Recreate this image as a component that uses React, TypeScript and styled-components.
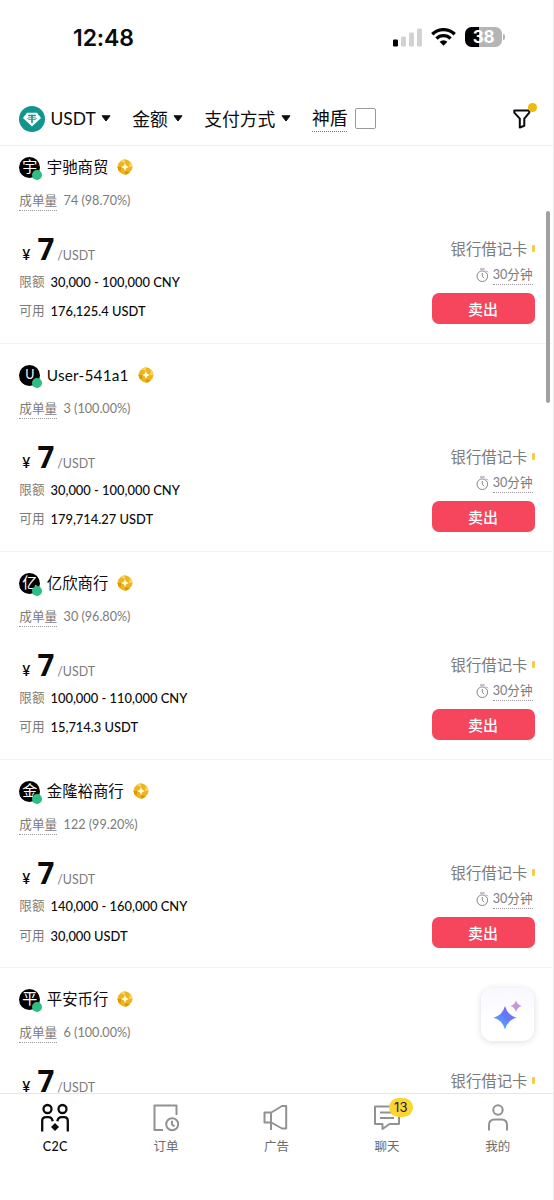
import React from "react";
import styled, { createGlobalStyle } from "styled-components";

const Global = createGlobalStyle`
  * { box-sizing: border-box; }
  body {
    margin: 0;
    background: #fff;
    color: #0b0b0b;
    font-family: Lato, "Noto Sans CJK SC", sans-serif;
  }
`;

const Screen = styled.div`
  position: relative;
  width: 554px;
  height: 1200px;
  display: flex;
  flex-direction: column;
  overflow: hidden;
  background: #fff;
  border-right: 1px solid #ececec;
`;

const StatusBar = styled.header`
  height: 91px;
  flex: none;
  display: flex;
  justify-content: space-between;
  padding: 23px 51px 0 73px;
`;

const Clock = styled.div`
  font: 600 23px/30px Inter, sans-serif;
  letter-spacing: -0.1px;
`;

const StatusIcons = styled.div`
  display: flex;
  align-items: center;
  height: 28px;
  gap: 9px;
`;

const Battery = styled.div`
  position: relative;
  width: 37px;
  height: 20px;
  border-radius: 6.5px;
  background: linear-gradient(90deg, #000 14px, #b5b5b5 14px);
  color: #fff;
  font: 700 17px/20px Inter, sans-serif;
  letter-spacing: -0.2px;
  text-align: center;
  &::after {
    content: "";
    position: absolute;
    left: 38px;
    top: 7px;
    width: 2px;
    height: 6px;
    border-radius: 0 2px 2px 0;
    background: #b5b5b5;
  }
`;

const FilterBar = styled.nav`
  height: 55px;
  flex: none;
  display: flex;
  align-items: center;
  padding: 1px 20px 0 19px;
  border-bottom: 1px solid #ededed;
`;

const FilterItem = styled.div<{ $gap?: number; $after: number }>`
  display: flex;
  align-items: center;
  gap: ${(p) => p.$gap ?? 5.5}px;
  margin-right: ${(p) => p.$after}px;
  font-size: 17.8px;
  line-height: 26px;
  white-space: nowrap;
`;

const Coin = styled.span`
  font-size: 17.4px;
`;

const Shield = styled.span`
  height: 27px;
  line-height: 26px;
  border-bottom: 1px dotted #777;
`;

const Checkbox = styled.span`
  width: 21px;
  height: 21px;
  border: 1px solid #999;
  border-radius: 2px;
`;

const FilterButton = styled.div`
  position: relative;
  width: 24px;
  height: 34px;
  margin-left: auto;
  margin-right: -4px;
  display: flex;
  align-items: center;
`;

const Dot = styled.i`
  position: absolute;
  right: 0;
  top: 1px;
  width: 9px;
  height: 9px;
  border-radius: 50%;
  background: #f0b90b;
`;

const List = styled.main`
  flex: 1;
  min-height: 0;
  overflow: hidden;
`;

const Offer = styled.article`
  height: 208.1px;
  padding: 19.5px 18.5px 0 19.3px;
  border-bottom: 1px solid #f3f3f3;
  &:first-child {
    margin-top: -10.5px;
  }
`;

const Merchant = styled.div`
  display: flex;
  align-items: center;
  height: 24px;
`;

const Avatar = styled.span<{ $latin: boolean }>`
  position: relative;
  width: 21px;
  height: 21px;
  border-radius: 50%;
  background: #000;
  color: #fff;
  font-size: ${(p) => (p.$latin ? 12.5 : 15)}px;
  line-height: ${(p) => (p.$latin ? 20 : 19)}px;
  text-align: center;
  &::after {
    content: "";
    position: absolute;
    left: 13px;
    top: 13px;
    width: 10px;
    height: 10px;
    border-radius: 50%;
    background: #2ebd85;
  }
`;

const Name = styled.span<{ $latin: boolean }>`
  margin: 0 9px 0 6.5px;
  height: 25px;
  font-size: 15.4px;
  line-height: 24px;
  letter-spacing: ${(p) => (p.$latin ? 0.18 : 0)}px;
`;

const Stats = styled.div`
  display: flex;
  gap: 6.5px;
  margin-top: 12.5px;
  height: 18px;
  font-size: 12.6px;
  line-height: 18px;
  color: #7b7b7b;
`;

const Dotted = styled.span`
  height: 19px;
  border-bottom: 1px dotted #999;
`;

const Body = styled.div`
  display: flex;
  justify-content: space-between;
  margin-top: 21.5px;
`;

const Terms = styled.div`
  display: flex;
  flex-direction: column;
`;

const Price = styled.div`
  display: flex;
  align-items: baseline;
  height: 36px;
  line-height: 36px;
  padding-left: 3px;
`;

const Currency = styled.span`
  font: 500 14.5px/36px Inter, sans-serif;
`;

const Amount = styled.strong`
  margin: 0 3px 0 7px;
  font: 700 29.5px/36px "Noto Sans", sans-serif;
`;

const Unit = styled.span`
  font-size: 12.4px;
  color: #7b7b7b;
`;

const Term = styled.div`
  display: flex;
  gap: 6px;
  height: 29.5px;
  align-items: center;
  font-size: 12.6px;
  line-height: 20px;
  white-space: nowrap;
`;

const TermLabel = styled.span`
  color: #7b7b7b;
`;

const TermValue = styled.span`
  font-weight: 500;
  font-size: 12.9px;
`;

const Side = styled.div`
  display: flex;
  flex-direction: column;
  align-items: flex-end;
  padding-top: 4px;
`;

const Payment = styled.div`
  display: flex;
  align-items: center;
  gap: 4.5px;
  height: 26px;
  font-size: 15.4px;
  color: #7b7b7b;
  &::after {
    content: "";
    width: 2.5px;
    height: 7px;
    border-radius: 1px;
    background: #f1cf45;
  }
`;

const Timer = styled.div`
  display: flex;
  align-items: center;
  gap: 4px;
  height: 24px;
  margin-top: 2px;
  padding-right: 2px;
  font-size: 12.6px;
  line-height: 18px;
  color: #7b7b7b;
`;

const SellButton = styled.button`
  width: 103px;
  height: 31px;
  margin-top: 6px;
  padding: 0;
  border: 0;
  border-radius: 7px;
  background: #f6465d;
  color: #fff;
  font: 500 15px/29px "Noto Sans CJK SC", sans-serif;
`;

const TabBar = styled.footer`
  height: 107px;
  flex: none;
  display: flex;
  border-top: 1px solid #e6e6e6;
`;

const Tab = styled.div<{ $active?: boolean }>`
  position: relative;
  flex: 1;
  display: flex;
  flex-direction: column;
  align-items: center;
  padding-top: 9px;
  font-size: 12.5px;
  line-height: 18px;
  font-weight: ${(p) => (p.$active ? 500 : 400)};
  letter-spacing: ${(p) => (p.$active ? 0.4 : 0)}px;
  color: ${(p) => (p.$active ? "#0b0b0b" : "#6b6b6b")};
  svg {
    color: ${(p) => (p.$active ? "#0b0b0b" : "#929292")};
    margin-bottom: 5px;
  }
`;

const Badge = styled.span`
  position: absolute;
  left: 57px;
  top: 4px;
  width: 24px;
  height: 19px;
  border-radius: 10px;
  background: #fcd535;
  color: #202020;
  font: 400 13px/19px Inter, sans-serif;
  text-align: center;
`;

const ScrollThumb = styled.div`
  position: absolute;
  left: 546px;
  top: 211px;
  width: 4px;
  height: 192px;
  border-radius: 2px;
  background: #a0a0a0;
`;

const Assistant = styled.div`
  position: absolute;
  left: 481px;
  top: 988px;
  width: 53px;
  height: 53px;
  border-radius: 12px;
  background: linear-gradient(#f8f8ff, #fff 60%);
  box-shadow: 0 1px 7px rgba(0, 0, 0, 0.14);
`;

const Caret = () => (
  <svg width="10" height="7" viewBox="0 0 10 7">
    <path d="M1 .8h8L5 6z" fill="#0b0b0b" stroke="#0b0b0b" strokeWidth="1" strokeLinejoin="round" />
  </svg>
);

const Tether = () => (
  <svg width="26" height="26" viewBox="0 0 26 26">
    <circle cx="13" cy="13" r="13" fill="#12958f" />
    <path d="M8 6.7h10l4 5.3-9 8.6L4 12z" fill="#fff" />
    <path d="M9.2 9.5h7.6M13 9.5v7.5" stroke="#12958f" strokeWidth="1.5" />
    <ellipse cx="13" cy="12.6" rx="4.6" ry="1" fill="none" stroke="#12958f" strokeWidth=".8" />
  </svg>
);

const Medal = () => (
  <svg width="16" height="16" viewBox="0 0 16 16">
    <path d="M5.2.9 8 .3l2.8.6 2 1.7 1.7 2L15.6 8l-1.1 3.3-1.7 2-2 1.7-2.8.7-2.8-.7-2-1.7-1.7-2L.4 8l1.1-3.4 1.7-2z" fill="#ebb51b" />
    <path d="M8 .3 5.2.9l-2 1.7L8 4zM15.6 8l-1.1-3.4-1.7-2L12 8z" fill="#f9d458" />
    <path d="M.4 8l1.1 3.3 1.7 2L4.5 8zM8 15.7l2.8-.7 2-1.7L8 12z" fill="#d79a0c" />
    <path d="M8 4l1.2 2.8L12 8 9.2 9.2 8 12 6.8 9.2 4 8l2.8-1.2z" fill="#fffbe0" />
  </svg>
);

const Stopwatch = () => (
  <svg width="13" height="15" viewBox="0 0 13 15" fill="none" stroke="#858585" strokeWidth="1">
    <circle cx="6.3" cy="8.2" r="5.3" />
    <path d="M4 1h4.6M6.3 5v3.4l1.8 1.8M10.2 2.7l1.5 1.5" />
  </svg>
);

const Signal = () => (
  <svg width="29" height="19" viewBox="0 0 29 19" fill="#d2d2d2">
    <rect x="0" y="11.5" width="5" height="7" rx="1.3" fill="#000" />
    <rect x="8" y="8.5" width="5" height="10" rx="1.3" />
    <rect x="16" y="4.5" width="5" height="14" rx="1.3" />
    <rect x="24" y=".5" width="5" height="18" rx="1.3" />
  </svg>
);

const Wifi = () => (
  <svg width="25" height="18" viewBox="0 0 25 18" fill="none" stroke="#000" strokeWidth="3.3">
    <path d="M1.3 6.2a16 16 0 0 1 22.4 0M5.4 10.5a10.2 10.2 0 0 1 14.2 0" />
    <path d="M12.5 17.7 8.6 13.8a5.6 5.6 0 0 1 7.8 0z" fill="#000" stroke="none" />
  </svg>
);

const Funnel = () => (
  <svg width="18" height="20" viewBox="0 0 18 20" fill="none" stroke="#0b0b0b" strokeWidth="2" strokeLinejoin="round">
    <path d="M1.3 1.5h15v2.1l-5 6.1v7.1l-4.500 1.700V9.700l-5.500-6.100z" />
  </svg>
);

const Sparkles = () => (
  <svg width="53" height="53" viewBox="0 0 53 53">
    <defs>
      <linearGradient id="big" x1="1" y1="0" x2=".2" y2="1">
        <stop offset="0" stopColor="#8a63e8" />
        <stop offset=".5" stopColor="#6379fa" />
        <stop offset="1" stopColor="#53b8f8" />
      </linearGradient>
      <linearGradient id="small" x1="0" y1="0" x2="1" y2="1">
        <stop offset="0" stopColor="#e2a0b5" />
        <stop offset="1" stopColor="#a98df2" />
      </linearGradient>
    </defs>
    <path d="M24 18q2.5 9.3 11.5 11.7-9 2.3-11.5 11.8-2.5-9.5-11.6-11.8Q21.5 27.3 24 18z" fill="url(#big)" />
    <path d="M35 12.3q1.1 4.6 5.8 5.8-4.7 1.2-5.8 5.8-1.1-4.6-5.8-5.8 4.7-1.2 5.8-5.8z" fill="url(#small)" />
  </svg>
);

const IconBox: React.FC<React.PropsWithChildren> = ({ children }) => (
  <svg width="30" height="30" viewBox="0 0 30 30" fill="none" stroke="currentColor" strokeWidth="2" strokeLinejoin="round">
    {children}
  </svg>
);

interface OfferData {
  name: string;
  initial: string;
  stats: string;
  limit: string;
  available: string;
}

const offers: OfferData[] = [
  { name: "宇驰商贸", initial: "宇", stats: "74 (98.70%)", limit: "30,000 - 100,000 CNY", available: "176,125.4 USDT" },
  { name: "User-541a1", initial: "U", stats: "3 (100.00%)", limit: "30,000 - 100,000 CNY", available: "179,714.27 USDT" },
  { name: "亿欣商行", initial: "亿", stats: "30 (96.80%)", limit: "100,000 - 110,000 CNY", available: "15,714.3 USDT" },
  { name: "金隆裕商行", initial: "金", stats: "122 (99.20%)", limit: "140,000 - 160,000 CNY", available: "30,000 USDT" },
  { name: "平安币行", initial: "平", stats: "6 (100.00%)", limit: "", available: "" },
];

const OfferCard = ({ offer }: { offer: OfferData }) => {
  const latin = offer.initial === "U";
  return (
    <Offer>
      <Merchant>
        <Avatar $latin={latin}>{offer.initial}</Avatar>
        <Name $latin={latin}>{offer.name}</Name>
        <Medal />
      </Merchant>
      <Stats>
        <Dotted>成单量</Dotted>
        <span>{offer.stats}</span>
      </Stats>
      <Body>
        <Terms>
          <Price>
            <Currency>¥</Currency>
            <Amount>7</Amount>
            <Unit>/USDT</Unit>
          </Price>
          {offer.limit && (
            <>
              <Term>
                <TermLabel>限额</TermLabel>
                <TermValue>{offer.limit}</TermValue>
              </Term>
              <Term>
                <TermLabel>可用</TermLabel>
                <TermValue>{offer.available}</TermValue>
              </Term>
            </>
          )}
        </Terms>
        <Side>
          <Payment>银行借记卡</Payment>
          {offer.limit && (
            <>
              <Timer>
                <Stopwatch />
                <Dotted>30分钟</Dotted>
              </Timer>
              <SellButton>卖出</SellButton>
            </>
          )}
        </Side>
      </Body>
    </Offer>
  );
};

export default function App() {
  return (
    <Screen>
      <Global />
      <StatusBar>
        <Clock>12:48</Clock>
        <StatusIcons>
          <Signal />
          <Wifi />
          <Battery>38</Battery>
        </StatusIcons>
      </StatusBar>
      <FilterBar>
        <FilterItem $after={21}>
          <Tether />
          <Coin>USDT</Coin>
          <Caret />
        </FilterItem>
        <FilterItem $after={21}>
          <span>金额</span>
          <Caret />
        </FilterItem>
        <FilterItem $after={21}>
          <span>支付方式</span>
          <Caret />
        </FilterItem>
        <FilterItem $gap={8} $after={0}>
          <Shield>神盾</Shield>
          <Checkbox />
        </FilterItem>
        <FilterButton>
          <Funnel />
          <Dot />
        </FilterButton>
      </FilterBar>
      <List>
        {offers.map((offer) => (
          <OfferCard key={offer.name} offer={offer} />
        ))}
      </List>
      <TabBar>
        <Tab $active>
          <IconBox>
            <circle cx="7.5" cy="6" r="4" strokeWidth="2.3" />
            <circle cx="22.5" cy="6" r="4" strokeWidth="2.3" />
            <path d="M2.2 28.5V18q0-3.8 3.8-3.8h2.5q3.3 0 4.2 4M27.8 28.5V18q0-3.8-3.8-3.8h-2.5q-3.3 0-4.2 4" strokeWidth="2.3" />
            <path d="M15 20l4 4-4 4-4-4z" fill="currentColor" stroke="none" />
          </IconBox>
          C2C
        </Tab>
        <Tab>
          <IconBox>
            <path d="M12 27H3.500V2.500h22v9.500" />
            <circle cx="21.2" cy="21.2" r="6" />
            <path d="M21 17.800V21.500l2.500 2" />
          </IconBox>
          订单
        </Tab>
        <Tab>
          <IconBox>
            <path d="M3.500 9.500h6.800L21 3h4.200v22.500H21l-10.700-6H3.500zM10 9.500V27" />
          </IconBox>
          广告
        </Tab>
        <Tab>
          <IconBox>
            <path d="M3 3.500h24v17.500h-9.500l-7 5v-5H3zM8 9.500h13M8 15h14" />
          </IconBox>
          <Badge>13</Badge>
          聊天
        </Tab>
        <Tab>
          <IconBox>
            <circle cx="15" cy="7" r="4.7" />
            <path d="M6 27.500v-5.500q0-5.500 5.500-5.500h7q5.500 0 5.500 5.500v5.500" />
          </IconBox>
          我的
        </Tab>
      </TabBar>
      <ScrollThumb />
      <Assistant>
        <Sparkles />
      </Assistant>
    </Screen>
  );
}
